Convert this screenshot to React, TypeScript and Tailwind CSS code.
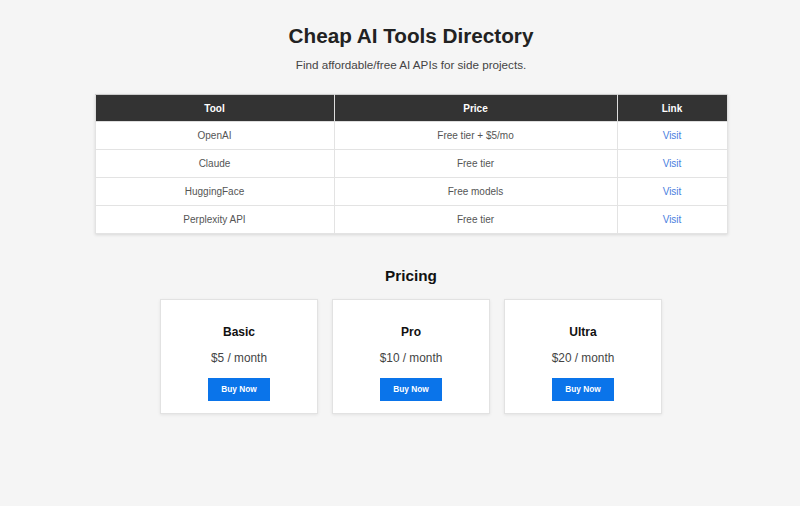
import React from "react";

const tools = [
  { name: "OpenAI", price: "Free tier + $5/mo" },
  { name: "Claude", price: "Free tier" },
  { name: "HuggingFace", price: "Free models" },
  { name: "Perplexity API", price: "Free tier" },
];

const plans = [
  { name: "Basic", price: "$5 / month" },
  { name: "Pro", price: "$10 / month" },
  { name: "Ultra", price: "$20 / month" },
];

export default function App() {
  return (
    <div
      className="min-h-[506px] w-full bg-[#f5f5f5] pl-[22px] pt-[24px]"
      style={{ fontFamily: '"Liberation Sans", Arial, sans-serif' }}
    >
      <div className="flex flex-col items-center">
        <h1 className="text-[20.7px] leading-[24px] font-bold text-[#222]">Cheap AI Tools Directory</h1>
        <p className="mt-[10px] text-[11.66px] leading-[14px] text-[#444]">
          Find affordable/free AI APIs for side projects.
        </p>

        <table className="mt-[22px] w-[633px] border-collapse bg-white text-[10px] shadow-[0_1px_3px_rgba(0,0,0,0.12)]">
          <thead>
            <tr className="h-[27px] bg-[#333] text-white">
              <th className="w-[239px] border border-[#ddd] border-t-[#ccc] font-bold">Tool</th>
              <th className="w-[283px] border border-[#ddd] border-t-[#ccc] font-bold">Price</th>
              <th className="border border-[#ddd] border-t-[#ccc] font-bold">Link</th>
            </tr>
          </thead>
          <tbody>
            {tools.map((t) => (
              <tr key={t.name} className="h-[28px] text-[#555]">
                <td className="border border-[#e3e3e3] text-center">{t.name}</td>
                <td className="border border-[#e3e3e3] text-center">{t.price}</td>
                <td className="border border-[#e3e3e3] text-center">
                  <a className="text-[#4a80e0]" href="#">Visit</a>
                </td>
              </tr>
            ))}
          </tbody>
        </table>

        <h2 className="mt-[33px] text-[15.3px] leading-[18px] font-bold text-[#111]">Pricing</h2>

        <div className="mt-[14px] flex gap-[14px]">
          {plans.map((p) => (
            <div
              key={p.name}
              className="flex h-[115px] w-[158px] flex-col items-center border border-[#e2e2e2] bg-white pt-[25px] shadow-[0_1px_3px_rgba(0,0,0,0.08)]"
            >
              <h3 className="text-[12px] leading-[14px] font-bold text-[#111]">{p.name}</h3>
              <div className="mt-[12px] text-[11.85px] leading-[14px] text-[#444]">{p.price}</div>
              <button className="mt-[13px] h-[23px] w-[62px] bg-[#0a74ea] text-[8.3px] font-bold text-white">
                Buy Now
              </button>
            </div>
          ))}
        </div>
      </div>
    </div>
  );
}
